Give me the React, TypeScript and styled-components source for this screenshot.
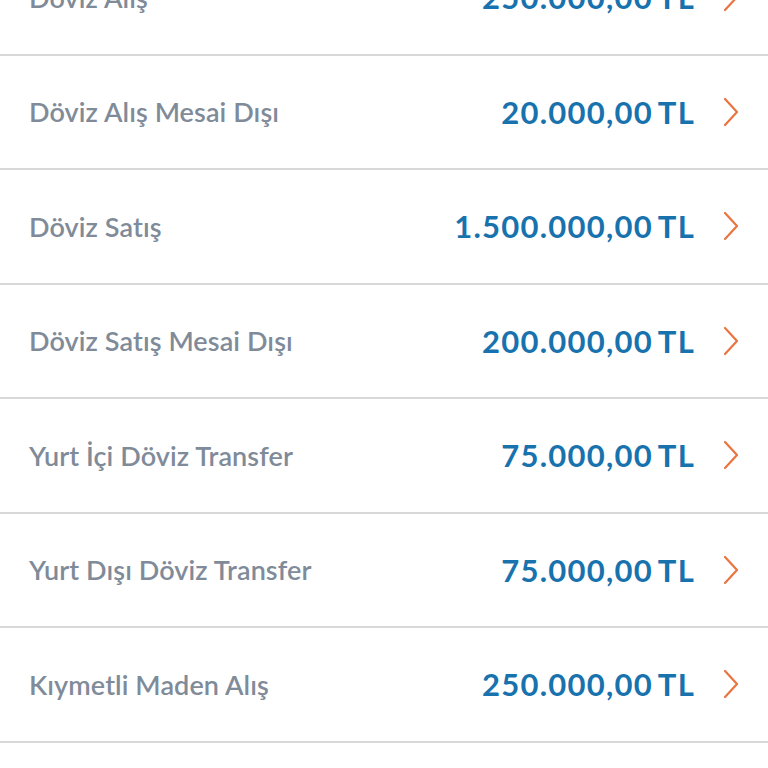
import React from 'react';
import styled, { createGlobalStyle } from 'styled-components';

const GlobalStyle = createGlobalStyle`
  html, body {
    margin: 0;
    padding: 0;
    background: #ffffff;
    overflow: hidden;
  }
  body {
    font-family: Lato, "Noto Sans", "Liberation Sans", sans-serif;
    -webkit-font-smoothing: antialiased;
  }
`;

const Screen = styled.div`
  width: 768px;
  height: 768px;
  overflow: hidden;
  background: #ffffff;
`;

// list is scrolled: the first row is partly above the viewport
const List = styled.ul`
  list-style: none;
  margin: -59px 0 0;
  padding: 0;
`;

const Row = styled.li`
  box-sizing: border-box;
  height: 114.5px;
  display: flex;
  align-items: center;
  padding: 0 28px 0 29px;
  border-bottom: 2px solid #d8d8d8;
`;

const Label = styled.span`
  flex: 1;
  font-size: 27px;
  font-weight: 600;
  color: #7f8b99;
  letter-spacing: 0.1px;
`;

const Amount = styled.span`
  font-size: 31px;
  font-weight: 700;
  color: #1872ad;
  letter-spacing: 1.25px;
  word-spacing: -3px;
  margin-right: -1px;
`;

const Chevron = styled.svg`
  margin-left: 28px;
  width: 18px;
  height: 30px;
  flex-shrink: 0;
`;

interface Limit {
  label: string;
  amount: string;
}

const limits: Limit[] = [
  { label: 'Döviz Alış', amount: '250.000,00 TL' },
  { label: 'Döviz Alış Mesai Dışı', amount: '20.000,00 TL' },
  { label: 'Döviz Satış', amount: '1.500.000,00 TL' },
  { label: 'Döviz Satış Mesai Dışı', amount: '200.000,00 TL' },
  { label: 'Yurt İçi Döviz Transfer', amount: '75.000,00 TL' },
  { label: 'Yurt Dışı Döviz Transfer', amount: '75.000,00 TL' },
  { label: 'Kıymetli Maden Alış', amount: '250.000,00 TL' },
  { label: 'Kıymetli Maden Satış', amount: '250.000,00 TL' },
];

const App: React.FC = () => {
  return (
    <Screen>
      <GlobalStyle />
      <List>
        {limits.map((item) => (
          <Row key={item.label}>
            <Label>{item.label}</Label>
            <Amount>{item.amount}</Amount>
            <Chevron viewBox="0 0 18 30" fill="none">
              <path
                d="M3 2 L15 15 L3 28"
                stroke="#ea7440"
                strokeWidth="2.2"
                strokeLinecap="round"
                strokeLinejoin="round"
              />
            </Chevron>
          </Row>
        ))}
      </List>
    </Screen>
  );
};

export default App;
